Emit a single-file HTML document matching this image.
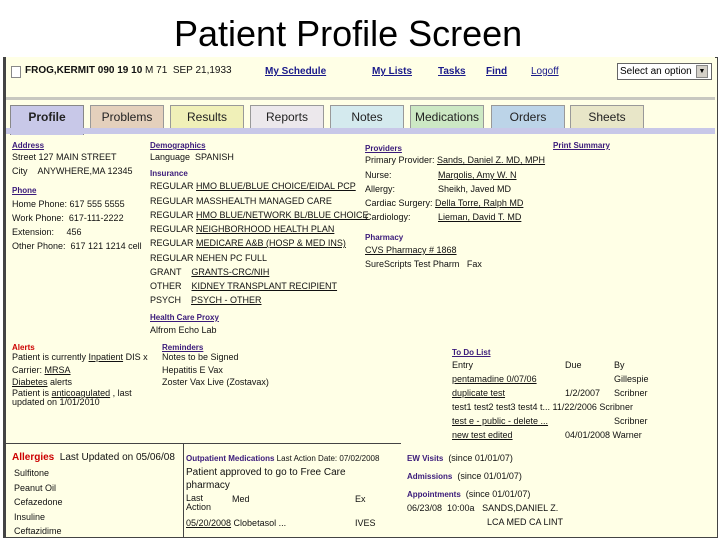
<!DOCTYPE html>
<html><head><meta charset="utf-8"><style>
body{margin:0;width:720px;height:540px;background:#fff;position:relative;overflow:hidden;font-family:"Liberation Sans",Arial,sans-serif;}
.a{position:absolute;white-space:nowrap;font-size:9px;color:#111;line-height:11px}
.h{color:#3a1a7a;font-weight:bold;text-decoration:underline;font-size:8px}
.hp{color:#3a1a7a;font-weight:bold;font-size:8px}
.r{color:#c00;font-weight:bold;font-size:8px}
u{text-decoration:underline}
.nav{position:absolute;top:66px;font-size:10px;font-weight:bold;color:#1a1a8a;text-decoration:underline}
.tab{position:absolute;top:105px;height:22px;border:1px solid #999;border-bottom:none;font-size:12px;text-align:center;line-height:22px;color:#222}
</style></head><body>
<div class="a" style="left:174px;top:12px;font-size:36px;line-height:44px;color:#000">Patient Profile Screen</div>
<div style="position:absolute;left:3px;top:57px;width:711px;height:479px;border:1px solid #444;border-left:3px solid #444;background:#ffffe6"></div>
<div style="position:absolute;left:6px;top:57px;width:709px;height:40px;background:#ffffe6;border-bottom:3px solid #c8c8c0"></div>
<div style="position:absolute;left:11px;top:66px;width:8px;height:10px;border:1px solid #888;background:#fff"></div>
<div class="a" style="left:25px;top:65px;font-size:10px"><b>FROG,KERMIT 090 19 10</b> M 71 &nbsp;SEP 21,1933</div>
<div class="nav" style="left:265px">My Schedule</div>
<div class="nav" style="left:372px">My Lists</div>
<div class="nav" style="left:438px">Tasks</div>
<div class="nav" style="left:486px">Find</div>
<div class="nav" style="left:531px;font-weight:normal">Logoff</div>
<div style="position:absolute;left:617px;top:63px;width:91px;height:15px;border:1px solid #666;background:#fff;font-size:10px;line-height:15px;padding-left:2px">Select an option</div>
<div style="position:absolute;left:696px;top:65px;width:10px;height:11px;background:#d4d0c8;border:1px solid #888;font-size:7px;text-align:center;line-height:11px">▼</div>
<div class="tab" style="left:10px;width:72px;background:#c8c8e8;height:29px;border-color:#888;font-weight:bold">Profile</div>
<div class="tab" style="left:90px;width:72px;background:#e4d0bc">Problems</div>
<div class="tab" style="left:170px;width:72px;background:#f0f0b8">Results</div>
<div class="tab" style="left:250px;width:72px;background:#ece8ec">Reports</div>
<div class="tab" style="left:330px;width:72px;background:#d4eaee">Notes</div>
<div class="tab" style="left:410px;width:72px;background:#cce8c4">Medications</div>
<div class="tab" style="left:491px;width:72px;background:#bcd4e8">Orders</div>
<div class="tab" style="left:570px;width:72px;background:#e8e6c8">Sheets</div>
<div style="position:absolute;left:6px;top:128px;width:709px;height:6px;background:#c8c8e8"></div>
<div class="a h" style="left:12px;top:140px">Address</div>
<div class="a" style="left:12px;top:152px">Street 127 MAIN STREET</div>
<div class="a" style="left:12px;top:166px">City &nbsp;&nbsp;&nbsp;ANYWHERE,MA 12345</div>
<div class="a h" style="left:12px;top:185px">Phone</div>
<div class="a" style="left:12px;top:199px">Home Phone: 617 555 5555</div>
<div class="a" style="left:12px;top:213px">Work Phone: &nbsp;617-111-2222</div>
<div class="a" style="left:12px;top:227px">Extension: &nbsp;&nbsp;&nbsp;&nbsp;456</div>
<div class="a" style="left:12px;top:241px">Other Phone: &nbsp;617 121 1214 cell</div>
<div class="a h" style="left:150px;top:140px">Demographics</div>
<div class="a" style="left:150px;top:152px">Language &nbsp;SPANISH</div>
<div class="a hp" style="left:150px;top:168px">Insurance</div>
<div class="a" style="left:150px;top:181px">REGULAR <u>HMO BLUE/BLUE CHOICE/EIDAL PCP</u></div>
<div class="a" style="left:150px;top:196px">REGULAR MASSHEALTH MANAGED CARE</div>
<div class="a" style="left:150px;top:210px">REGULAR <u>HMO BLUE/NETWORK BL/BLUE CHOICE</u></div>
<div class="a" style="left:150px;top:224px">REGULAR <u>NEIGHBORHOOD HEALTH PLAN</u></div>
<div class="a" style="left:150px;top:238px">REGULAR <u>MEDICARE A&amp;B (HOSP &amp; MED INS)</u></div>
<div class="a" style="left:150px;top:253px">REGULAR NEHEN PC FULL</div>
<div class="a" style="left:150px;top:267px">GRANT &nbsp;&nbsp;&nbsp;<u>GRANTS-CRC/NIH</u></div>
<div class="a" style="left:150px;top:281px">OTHER &nbsp;&nbsp;&nbsp;<u>KIDNEY TRANSPLANT RECIPIENT</u></div>
<div class="a" style="left:150px;top:295px">PSYCH &nbsp;&nbsp;&nbsp;<u>PSYCH - OTHER</u></div>
<div class="a h" style="left:150px;top:312px">Health Care Proxy</div>
<div class="a" style="left:150px;top:325px">Alfrom Echo Lab</div>
<div class="a h" style="left:365px;top:143px">Providers</div>
<div class="a h" style="left:553px;top:140px">Print Summary</div>
<div class="a" style="left:365px;top:155px">Primary Provider: <u>Sands, Daniel Z. MD, MPH</u></div>
<div class="a" style="left:365px;top:170px">Nurse: <span style="position:absolute;left:73px"><u>Margolis, Amy W. N</u></span></div>
<div class="a" style="left:365px;top:184px">Allergy: <span style="position:absolute;left:73px">Sheikh, Javed MD</span></div>
<div class="a" style="left:365px;top:198px">Cardiac Surgery: <u>Della Torre, Ralph MD</u></div>
<div class="a" style="left:365px;top:212px">Cardiology: <span style="position:absolute;left:73px"><u>Lieman, David T. MD</u></span></div>
<div class="a hp" style="left:365px;top:232px">Pharmacy</div>
<div class="a" style="left:365px;top:245px"><u>CVS Pharmacy # 1868</u></div>
<div class="a" style="left:365px;top:259px">SureScripts Test Pharm &nbsp;&nbsp;Fax</div>
<div class="a r" style="left:12px;top:342px">Alerts</div>
<div class="a" style="left:12px;top:352px">Patient is currently <u>Inpatient</u> DIS x</div>
<div class="a" style="left:12px;top:365px">Carrier: <u>MRSA</u></div>
<div class="a" style="left:12px;top:377px"><u>Diabetes</u> alerts</div>
<div class="a" style="left:12px;top:389px;line-height:9px">Patient is <u>anticoagulated</u> , last<br>updated on 1/01/2010</div>
<div class="a h" style="left:162px;top:342px">Reminders</div>
<div class="a" style="left:162px;top:352px">Notes to be Signed</div>
<div class="a" style="left:162px;top:365px">Hepatitis E Vax</div>
<div class="a" style="left:162px;top:377px">Zoster Vax Live (Zostavax)</div>
<div class="a h" style="left:452px;top:347px">To Do List</div>
<div class="a" style="left:452px;top:360px">Entry</div><div class="a" style="left:565px;top:360px">Due</div><div class="a" style="left:614px;top:360px">By</div>
<div class="a" style="left:452px;top:374px"><u>pentamadine 0/07/06</u></div><div class="a" style="left:614px;top:374px">Gillespie</div>
<div class="a" style="left:452px;top:388px"><u>duplicate test</u></div><div class="a" style="left:565px;top:388px">1/2/2007</div><div class="a" style="left:614px;top:388px">Scribner</div>
<div class="a" style="left:452px;top:402px">test1 test2 test3 test4 t... 11/22/2006 Scribner</div>
<div class="a" style="left:452px;top:416px"><u>test e - public - delete ...</u></div><div class="a" style="left:614px;top:416px">Scribner</div>
<div class="a" style="left:452px;top:430px"><u>new test edited</u></div><div class="a" style="left:565px;top:430px">04/01/2008 Warner</div>
<div style="position:absolute;left:6px;top:443px;width:395px;height:1px;background:#444"></div>
<div style="position:absolute;left:183px;top:443px;width:1px;height:94px;background:#444"></div>
<div class="a" style="left:12px;top:452px;font-size:10px"><b style="color:#c00">Allergies</b> &nbsp;Last Updated on 05/06/08</div>
<div class="a" style="left:14px;top:468px">Sulfitone</div>
<div class="a" style="left:14px;top:483px">Peanut Oil</div>
<div class="a" style="left:14px;top:497px">Cefazedone</div>
<div class="a" style="left:14px;top:512px">Insuline</div>
<div class="a" style="left:14px;top:526px;height:9px;overflow:hidden">Ceftazidime</div>
<div class="a" style="left:186px;top:453px;font-size:8px"><b style="color:#3a1a7a">Outpatient Medications</b> Last Action Date: 07/02/2008</div>
<div class="a" style="left:186px;top:466px;font-size:10px;line-height:13px">Patient approved to go to Free Care<br>pharmacy</div>
<div class="a" style="left:186px;top:494px;line-height:9px">Last<br>Action</div><div class="a" style="left:232px;top:494px">Med</div><div class="a" style="left:355px;top:494px">Ex</div>
<div class="a" style="left:186px;top:518px"><u>05/20/2008</u> Clobetasol ...</div><div class="a" style="left:355px;top:518px">IVES</div>
<div class="a" style="left:407px;top:453px"><b class="hp">EW Visits</b> &nbsp;(since 01/01/07)</div>
<div class="a" style="left:407px;top:471px"><b class="hp">Admissions</b> &nbsp;(since 01/01/07)</div>
<div class="a" style="left:407px;top:489px"><b class="hp">Appointments</b> &nbsp;(since 01/01/07)</div>
<div class="a" style="left:407px;top:503px">06/23/08 &nbsp;10:00a &nbsp;&nbsp;SANDS,DANIEL Z.</div>
<div class="a" style="left:487px;top:517px">LCA MED CA LINT</div>
</body></html>
